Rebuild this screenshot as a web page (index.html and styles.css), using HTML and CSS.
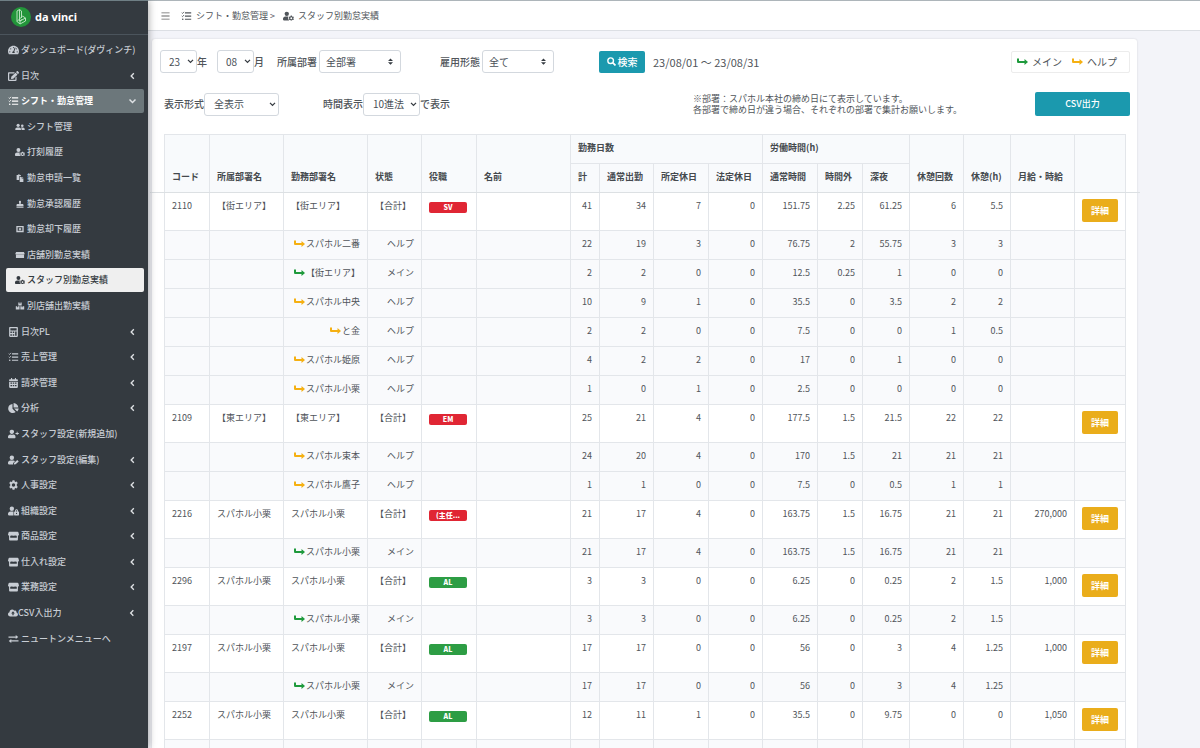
FILE: index.html
```html
<!DOCTYPE html>
<html lang="ja">
<head>
    <meta charset="UTF-8">
    <meta name="viewport" content="width=device-width, initial-scale=1.0">
    <title>スタッフ別勤怠実績 | da vinci</title>
    <link rel="stylesheet" href="styles.css">
</head>
<body>
    <svg class="sprite" aria-hidden="true">
        <symbol id="dashboard" viewBox="0 0 576 512"><path d="M288 32C128.94 32 0 160.94 0 320c0 52.8 14.25 102.26 39.06 144.8 5.61 9.62 16.3 15.2 27.44 15.2h443c11.14 0 21.83-5.58 27.44-15.2C561.75 422.26 576 372.8 576 320c0-159.06-128.94-288-288-288zm0 64c14.71 0 26.58 10.13 30.32 23.65-1.11 2.26-2.64 4.23-3.45 6.67l-9.22 27.67c-5.13 3.49-10.97 6.01-17.64 6.01-17.67 0-32-14.33-32-32S270.33 96 288 96zM96 384c-17.67 0-32-14.33-32-32s14.33-32 32-32 32 14.33 32 32-14.33 32-32 32zm48-160c-17.67 0-32-14.33-32-32s14.33-32 32-32 32 14.33 32 32-14.33 32-32 32zm246.77-72.41l-61.33 184C343.13 347.33 352 364.54 352 384c0 11.72-3.38 22.55-8.88 32H232.88c-5.5-9.45-8.88-20.28-8.88-32 0-33.94 26.5-61.43 59.9-63.59l61.34-184.01c4.17-12.56 17.73-19.45 30.36-15.17 12.57 4.19 19.35 17.79 15.17 30.36zm14.66 57.2l15.52-46.55c3.47-1.29 7.13-2.23 11.05-2.23 17.67 0 32 14.33 32 32s-14.33 32-32 32c-11.38-.01-20.89-6.28-26.57-15.22zM480 384c-17.67 0-32-14.33-32-32s14.33-32 32-32 32 14.33 32 32-14.33 32-32 32z"/></symbol>
        <symbol id="edit" viewBox="0 0 576 512"><path d="M402.6 83.2l90.2 90.2c3.8 3.8 3.8 10 0 13.8L274.4 405.6l-92.8 10.3c-12.4 1.4-22.9-9.1-21.5-21.5l10.3-92.8L388.8 83.2c3.8-3.8 10-3.8 13.8 0zm162-22.9l-48.8-48.8c-15.2-15.2-39.9-15.2-55.2 0l-35.4 35.4c-3.8 3.8-3.8 10 0 13.8l90.2 90.2c3.8 3.8 10 3.8 13.8 0l35.4-35.4c15.2-15.3 15.2-40 0-55.2zM384 346.2V448H64V128h229.8c3.2 0 6.2-1.3 8.5-3.5l40-40c7.6-7.6 2.2-20.5-8.5-20.5H48C21.5 64 0 85.5 0 112v352c0 26.5 21.5 48 48 48h352c26.5 0 48-21.5 48-48V306.2c0-10.7-12.9-16-20.5-8.5l-40 40c-2.2 2.3-3.5 5.3-3.5 8.5z"/></symbol>
        <symbol id="tasks" viewBox="0 0 512 512"><path d="M176 64h320v60H176zM176 228h320v60H176zM176 392h320v60H176z"/><path d="M12 88l40 38 74-82M12 252l40 38 74-82" fill="none" stroke="currentColor" stroke-width="44"/><circle cx="64" cy="420" r="42"/></symbol>
        <symbol id="users" viewBox="0 0 640 512"><circle cx="200" cy="150" r="100"/><path d="M20 450v-50c0-70 50-120 110-120h140c60 0 110 50 110 120v50z"/><circle cx="465" cy="170" r="82"/><path d="M420 450v-50c0-48-18-84-44-112 14-6 28-8 44-8h90c60 0 110 50 110 120v50z"/></symbol>
        <symbol id="user" viewBox="0 0 448 512"><path d="M224 256c70.7 0 128-57.3 128-128S294.7 0 224 0 96 57.3 96 128s57.3 128 128 128zm89.600 32h-16.700c-22.200 10.200-46.900 16-72.900 16s-50.600-5.800-72.900-16h-16.700C60.200 288 0 348.200 0 422.400V464c0 26.500 21.500 48 48 48h352c26.500 0 48-21.500 48-48v-41.600c0-74.200-60.200-134.400-134.400-134.400z"/></symbol>
        <symbol id="user-cog" viewBox="0 0 640 512"><circle cx="220" cy="128" r="126"/><path d="M310 288c-10 25-14 50-14 80 0 55 24 105 62 144H48c-26 0-48-22-48-48v-42c0-74 60-134 134-134z"/><path fill-rule="evenodd" d="M450 232h64l10 42 36 20 42-12 32 54-32 31v40l32 31-32 54-42-12-36 20-10 12h-64l-10-12-36-20-42 12-32-54 32-31v-40l-32-31 32-54 42 12 36-20zM482 330a56 56 0 1 0 0 112a56 56 0 1 0 0-112z"/></symbol>
        <symbol id="user-plus" viewBox="0 0 640 512"><use href="#user" width="448" height="512"/><path d="M508 130h48v70h72v50h-72v70h-48v-70h-72v-50h72z"/></symbol>
        <symbol id="user-edit" viewBox="0 0 640 512"><circle cx="224" cy="128" r="128"/><path d="M134 288h180c38 0 70 16 94 40L300 436l-10 76H48c-26 0-48-22-48-48v-42c0-74 60-134 134-134z"/><path d="M540 256l84 84-180 164-104 8 10-86z"/></symbol>
        <symbol id="user-lock" viewBox="0 0 640 512"><circle cx="224" cy="128" r="128"/><path d="M134 288h180l6 6v218H48c-26 0-48-22-48-48v-42c0-74 60-134 134-134z"/><path fill-rule="evenodd" d="M384 288h24v-44c0-50 40-90 88-90s88 40 88 90v44h24c18 0 32 14 32 32v160c0 18-14 32-32 32H384c-18 0-32-14-32-32V320c0-18 14-32 32-32zm76 0h72v-44c0-20-16-38-36-38s-36 18-36 38zM496 362a36 36 0 1 0 0 72a36 36 0 1 0 0-72z"/></symbol>
        <symbol id="paste" viewBox="0 0 512 512"><path d="M40 60h90l30-40h50l30 40h70v90H200v240H40z"/><path d="M236 190h130v100h106v220H236zM396 190l76 72h-76z"/></symbol>
        <symbol id="stamp" viewBox="0 0 512 512"><path d="M32 430h448v64H32zM190 110c0-90 132-90 132 0 0 60-32 90-20 150h110c40 0 68 30 68 68v66H32v-66c0-38 28-68 68-68h110c12-60-20-90-20-150z"/></symbol>
        <symbol id="reject" viewBox="0 0 512 512"><path fill-rule="evenodd" d="M20 60h472v400H20zM106 146v228h300V146zM206 174l50 50 50-50 36 36-50 50 50 50-36 36-50-50-50 50-36-36 50-50-50-50z"/></symbol>
        <symbol id="shop" viewBox="0 0 640 512"><path d="M70 60h500l60 140H10zM60 220h520v230H60z"/></symbol>
        <symbol id="store" viewBox="0 0 616 512"><path fill-rule="evenodd" d="M80 16h456c24 0 38 12 44 30l32 110c12 50-20 84-56 88v210c0 28-20 50-48 50H108c-28 0-48-22-48-50V244c-36-4-68-38-56-88L36 46c6-18 20-30 44-30zM124 244v116h368V244c-38 10-66-4-92-26-54 40-130 40-184 0-26 22-54 36-92 26z"/></symbol>
        <symbol id="boxes" viewBox="0 0 576 512"><path d="M180 30h80v74h56V30h80v190H180zM20 270h90v70h50v-70h100v210H20zM310 270h90v70h50v-70h106v210H310z"/></symbol>
        <symbol id="calculator" viewBox="0 0 448 512"><path fill-rule="evenodd" d="M48 0h352c26 0 48 22 48 48v416c0 26-22 48-48 48H48c-26 0-48-22-48-48V48C0 22 22 0 48 0zM64 64v112h320V64zM64 232v76h76v-76zM186 232v76h76v-76zM308 232v212h76V232zM64 368v76h76v-76zM186 368v76h76v-76z"/></symbol>
        <symbol id="calendar" viewBox="0 0 448 512"><path fill-rule="evenodd" d="M96 0h56v64h144V0h56v64h48c26 0 48 22 48 48v352c0 26-22 48-48 48H48c-26 0-48-22-48-48V112c0-26 22-48 48-48h48zM0 152v34h448v-34zM70 230v70h76v-70zM186 230v70h76v-70zM302 230v70h76v-70zM70 358v70h76v-70zM186 358v70h76v-70zM302 358v70h76v-70z"/></symbol>
        <symbol id="pie" viewBox="0 0 544 512"><path d="M220 48v244l164 164c-40 36-92 56-144 56C108 512 0 404 0 276 0 152 96 54 220 48z"/><path d="M276 0c136 8 236 108 244 236H276zM300 284h240c-6 60-34 110-76 150z"/></symbol>
        <symbol id="cog" viewBox="0 0 512 512"><path fill-rule="evenodd" d="M206 12h100l12 62 46 26 60-20 50 86-48 42v96l48 42-50 86-60-20-46 26-12 62H206l-12-62-46-26-60 20-50-86 48-42v-96l-48-42 50-86 60 20 46-26zM256 168a88 88 0 1 0 0 176a88 88 0 1 0 0-176z"/></symbol>
        <symbol id="cloud" viewBox="0 0 640 512"><path fill-rule="evenodd" d="M538 227c4-12 6-23 6-35 0-72-82-118-144-80C324-14 96 22 96 208 40 224 0 278 0 336c0 80 64 144 144 144h368c140 0 182-198 26-253zM320 150l120 130h-80v112h-80V280h-80z"/></symbol>
        <symbol id="exchange" viewBox="0 0 512 512"><path d="M0 128h370V56l130 102-130 102v-72H0zM512 324H142v-72L12 354l130 102v-72h370z"/></symbol>
        <symbol id="bars" viewBox="0 0 448 512"><path d="M16 76h416v42H16zM16 236h416v42H16zM16 396h416v42H16z"/></symbol>
        <symbol id="left" viewBox="0 0 8 12"><path d="M6 2L2 6l4 4" fill="none" stroke="currentColor" stroke-width="2"/></symbol>
        <symbol id="down" viewBox="0 0 12 8"><path d="M2 2l4 4 4-4" fill="none" stroke="currentColor" stroke-width="2"/></symbol>
        <symbol id="search" viewBox="0 0 16 16"><path d="M10.500 10.500L15 15" stroke="currentColor" stroke-width="3"/><circle cx="6.500" cy="6.500" r="5" fill="none" stroke="currentColor" stroke-width="2.500"/></symbol>
        <symbol id="arrow" viewBox="0 0 22 14"><path d="M0 1h4v5h11V2l7 6-7 6v-4H3c-2 0-3-1-3-3z"/></symbol>
    </svg>

    <aside class="sidebar">
        <a class="brand" href="#">
            <svg class="logo" viewBox="0 0 40 40"><circle cx="20" cy="20" r="20" fill="#23953a"/><path d="M12 29V8l5-3v19l-5 5M17 5l4 3v14M12 29l6 5 11-6v-6l-6-4-6 6v4l5-3M18 34v-6l11-6" fill="none" stroke="#b7e3bd" stroke-width="2"/></svg>
            da vinci
        </a>
        <nav class="menu">
            <a href="#"><svg><use href="#dashboard"/></svg>ダッシュボード(ダヴィンチ)</a>
            <a href="#"><svg><use href="#edit"/></svg>日次<svg class="chevron"><use href="#left"/></svg></a>
            <a class="open" href="#"><svg><use href="#tasks"/></svg>シフト・勤怠管理<svg class="chevron"><use href="#down"/></svg></a>
            <a class="sub" href="#"><svg><use href="#users"/></svg>シフト管理</a>
            <a class="sub" href="#"><svg><use href="#user-cog"/></svg>打刻履歴</a>
            <a class="sub" href="#"><svg><use href="#paste"/></svg>勤怠申請一覧</a>
            <a class="sub" href="#"><svg><use href="#stamp"/></svg>勤怠承認履歴</a>
            <a class="sub" href="#"><svg><use href="#reject"/></svg>勤怠却下履歴</a>
            <a class="sub" href="#"><svg><use href="#shop"/></svg>店舗別勤怠実績</a>
            <a class="sub current" href="#"><svg><use href="#user-cog"/></svg>スタッフ別勤怠実績</a>
            <a class="sub" href="#"><svg><use href="#boxes"/></svg>別店舗出勤実績</a>
            <a href="#"><svg><use href="#calculator"/></svg>日次PL<svg class="chevron"><use href="#left"/></svg></a>
            <a href="#"><svg><use href="#tasks"/></svg>売上管理<svg class="chevron"><use href="#left"/></svg></a>
            <a href="#"><svg><use href="#calendar"/></svg>請求管理<svg class="chevron"><use href="#left"/></svg></a>
            <a href="#"><svg><use href="#pie"/></svg>分析<svg class="chevron"><use href="#left"/></svg></a>
            <a href="#"><svg><use href="#user-plus"/></svg>スタッフ設定(新規追加)</a>
            <a href="#"><svg><use href="#user-edit"/></svg>スタッフ設定(編集)<svg class="chevron"><use href="#left"/></svg></a>
            <a href="#"><svg><use href="#cog"/></svg>人事設定<svg class="chevron"><use href="#left"/></svg></a>
            <a href="#"><svg><use href="#user-lock"/></svg>組織設定<svg class="chevron"><use href="#left"/></svg></a>
            <a href="#"><svg><use href="#store"/></svg>商品設定<svg class="chevron"><use href="#left"/></svg></a>
            <a href="#"><svg><use href="#store"/></svg>仕入れ設定<svg class="chevron"><use href="#left"/></svg></a>
            <a href="#"><svg><use href="#store"/></svg>業務設定<svg class="chevron"><use href="#left"/></svg></a>
            <a class="narrow" href="#"><svg><use href="#cloud"/></svg>CSV入出力<svg class="chevron"><use href="#left"/></svg></a>
            <a href="#"><svg><use href="#exchange"/></svg>ニュートンメニューへ</a>
        </nav>
    </aside>

    <div class="page">
        <header class="topbar">
            <button class="toggle" type="button" aria-label="メニュー"><svg><use href="#bars"/></svg></button>
            <a href="#"><svg><use href="#tasks"/></svg>シフト・勤怠管理 &gt;</a>
            <a href="#"><svg><use href="#user-cog"/></svg>スタッフ別勤怠実績</a>
        </header>

        <main class="card">
            <form class="filters">
                <div class="field year"><select id="year"><option>23</option></select><label for="year">年</label></div>
                <div class="field month"><select id="month"><option>08</option></select><label for="month">月</label></div>
                <div class="field dept"><label for="dept">所属部署</label><select class="updown" id="dept"><option>全部署</option></select></div>
                <div class="field employ"><label for="employ">雇用形態</label><select class="updown" id="employ"><option>全て</option></select></div>
                <button class="btn search" type="button"><svg><use href="#search"/></svg>検索</button>
                <span class="range">23/08/01 ～ 23/08/31</span>
                <div class="legend">
                    <span><svg class="arrow main"><use href="#arrow"/></svg>メイン</span>
                    <span><svg class="arrow help"><use href="#arrow"/></svg>ヘルプ</span>
                </div>
            </form>
            <form class="filters second">
                <div class="field format"><label for="format">表示形式</label><select id="format"><option>全表示</option></select></div>
                <div class="field time"><label for="time">時間表示</label><select id="time"><option>10進法</option></select><span>で表示</span></div>
                <p class="note">※部署：スパホル本社の締め日にて表示しています。<br>各部署で締め日が違う場合、それぞれの部署で集計お願いします。</p>
                <button class="btn csv" type="button">CSV出力</button>
            </form>

            <div class="table-area">
                <table>
                    <colgroup>
                        <col class="w45"><col class="w74"><col class="w84"><col class="w54"><col class="w55"><col class="w94">
                        <col class="w29"><col class="w54"><col class="w55"><col class="w54"><col class="w55"><col class="w45"><col class="w47">
                        <col class="w54"><col class="w47"><col class="w64"><col class="w51">
                    </colgroup>
                    <thead>
                        <tr>
                            <th rowspan="2">コード</th><th rowspan="2">所属部署名</th><th rowspan="2">勤務部署名</th><th rowspan="2">状態</th><th rowspan="2">役職</th><th rowspan="2">名前</th>
                            <th colspan="4">勤務日数</th><th colspan="3">労働時間(h)</th>
                            <th rowspan="2">休憩回数</th><th rowspan="2">休憩(h)</th><th rowspan="2">月給・時給</th><th rowspan="2"></th>
                        </tr>
                        <tr>
                            <th>計</th><th>通常出勤</th><th>所定休日</th><th>法定休日</th><th>通常時間</th><th>時間外</th><th>深夜</th>
                        </tr>
                    </thead>
                    <tbody>
                        <tr class="total"><td>2110</td><td>【街エリア】</td><td>【街エリア】</td><td>【合計】</td><td><span class="badge red">SV</span></td><td></td><td>41</td><td>34</td><td>7</td><td>0</td><td>151.75</td><td>2.25</td><td>61.25</td><td>6</td><td>5.5</td><td></td><td><button class="detail" type="button">詳細</button></td></tr>
                        <tr><td></td><td></td><td><svg class="arrow help"><use href="#arrow"/></svg>スパホル二番</td><td>ヘルプ</td><td></td><td></td><td>22</td><td>19</td><td>3</td><td>0</td><td>76.75</td><td>2</td><td>55.75</td><td>3</td><td>3</td><td></td><td></td></tr>
                        <tr><td></td><td></td><td><svg class="arrow main"><use href="#arrow"/></svg>【街エリア】</td><td>メイン</td><td></td><td></td><td>2</td><td>2</td><td>0</td><td>0</td><td>12.5</td><td>0.25</td><td>1</td><td>0</td><td>0</td><td></td><td></td></tr>
                        <tr><td></td><td></td><td><svg class="arrow help"><use href="#arrow"/></svg>スパホル中央</td><td>ヘルプ</td><td></td><td></td><td>10</td><td>9</td><td>1</td><td>0</td><td>35.5</td><td>0</td><td>3.5</td><td>2</td><td>2</td><td></td><td></td></tr>
                        <tr><td></td><td></td><td><svg class="arrow help"><use href="#arrow"/></svg>と金</td><td>ヘルプ</td><td></td><td></td><td>2</td><td>2</td><td>0</td><td>0</td><td>7.5</td><td>0</td><td>0</td><td>1</td><td>0.5</td><td></td><td></td></tr>
                        <tr><td></td><td></td><td><svg class="arrow help"><use href="#arrow"/></svg>スパホル姫原</td><td>ヘルプ</td><td></td><td></td><td>4</td><td>2</td><td>2</td><td>0</td><td>17</td><td>0</td><td>1</td><td>0</td><td>0</td><td></td><td></td></tr>
                        <tr><td></td><td></td><td><svg class="arrow help"><use href="#arrow"/></svg>スパホル小栗</td><td>ヘルプ</td><td></td><td></td><td>1</td><td>0</td><td>1</td><td>0</td><td>2.5</td><td>0</td><td>0</td><td>0</td><td>0</td><td></td><td></td></tr>
                        <tr class="total"><td>2109</td><td>【東エリア】</td><td>【東エリア】</td><td>【合計】</td><td><span class="badge red">EM</span></td><td></td><td>25</td><td>21</td><td>4</td><td>0</td><td>177.5</td><td>1.5</td><td>21.5</td><td>22</td><td>22</td><td></td><td><button class="detail" type="button">詳細</button></td></tr>
                        <tr><td></td><td></td><td><svg class="arrow help"><use href="#arrow"/></svg>スパホル束本</td><td>ヘルプ</td><td></td><td></td><td>24</td><td>20</td><td>4</td><td>0</td><td>170</td><td>1.5</td><td>21</td><td>21</td><td>21</td><td></td><td></td></tr>
                        <tr><td></td><td></td><td><svg class="arrow help"><use href="#arrow"/></svg>スパホル鷹子</td><td>ヘルプ</td><td></td><td></td><td>1</td><td>1</td><td>0</td><td>0</td><td>7.5</td><td>0</td><td>0.5</td><td>1</td><td>1</td><td></td><td></td></tr>
                        <tr class="total"><td>2216</td><td>スパホル小栗</td><td>スパホル小栗</td><td>【合計】</td><td><span class="badge red">(主任...</span></td><td></td><td>21</td><td>17</td><td>4</td><td>0</td><td>163.75</td><td>1.5</td><td>16.75</td><td>21</td><td>21</td><td>270,000</td><td><button class="detail" type="button">詳細</button></td></tr>
                        <tr><td></td><td></td><td><svg class="arrow main"><use href="#arrow"/></svg>スパホル小栗</td><td>メイン</td><td></td><td></td><td>21</td><td>17</td><td>4</td><td>0</td><td>163.75</td><td>1.5</td><td>16.75</td><td>21</td><td>21</td><td></td><td></td></tr>
                        <tr class="total"><td>2296</td><td>スパホル小栗</td><td>スパホル小栗</td><td>【合計】</td><td><span class="badge green">AL</span></td><td></td><td>3</td><td>3</td><td>0</td><td>0</td><td>6.25</td><td>0</td><td>0.25</td><td>2</td><td>1.5</td><td>1,000</td><td><button class="detail" type="button">詳細</button></td></tr>
                        <tr><td></td><td></td><td><svg class="arrow main"><use href="#arrow"/></svg>スパホル小栗</td><td>メイン</td><td></td><td></td><td>3</td><td>3</td><td>0</td><td>0</td><td>6.25</td><td>0</td><td>0.25</td><td>2</td><td>1.5</td><td></td><td></td></tr>
                        <tr class="total"><td>2197</td><td>スパホル小栗</td><td>スパホル小栗</td><td>【合計】</td><td><span class="badge green">AL</span></td><td></td><td>17</td><td>17</td><td>0</td><td>0</td><td>56</td><td>0</td><td>3</td><td>4</td><td>1.25</td><td>1,000</td><td><button class="detail" type="button">詳細</button></td></tr>
                        <tr><td></td><td></td><td><svg class="arrow main"><use href="#arrow"/></svg>スパホル小栗</td><td>メイン</td><td></td><td></td><td>17</td><td>17</td><td>0</td><td>0</td><td>56</td><td>0</td><td>3</td><td>4</td><td>1.25</td><td></td><td></td></tr>
                        <tr class="total"><td>2252</td><td>スパホル小栗</td><td>スパホル小栗</td><td>【合計】</td><td><span class="badge green">AL</span></td><td></td><td>12</td><td>11</td><td>1</td><td>0</td><td>35.5</td><td>0</td><td>9.75</td><td>0</td><td>0</td><td>1,050</td><td><button class="detail" type="button">詳細</button></td></tr>
                        <tr><td></td><td></td><td><svg class="arrow main"><use href="#arrow"/></svg>スパホル小栗</td><td>メイン</td><td></td><td></td><td>12</td><td>11</td><td>1</td><td>0</td><td>35.5</td><td>0</td><td>9.75</td><td>0</td><td>0</td><td></td><td></td></tr>
                    </tbody>
                </table>
            </div>
        </main>
    </div>
</body>
</html>
```
FILE: styles.css
```css
* { box-sizing: border-box; margin: 0; padding: 0; }
body {
    display: flex;
    height: 100vh;
    overflow: hidden;
    background: #f3f4f9;
    color: #50555a;
    font-family: "Noto Sans CJK JP", "Noto Sans", sans-serif;
    font-size: 9px;
    line-height: 12px;
}
a { color: inherit; text-decoration: none; }
svg { fill: currentColor; flex: none; }
button, select { font: inherit; }
.sprite { position: absolute; width: 0; height: 0; }

/* sidebar */
.sidebar {
    display: flex;
    flex-direction: column;
    flex: 0 0 148px;
    background: #343a40;
    color: #c8cdd4;
    border-top: 1px solid #6f7f85;
    box-shadow: 0 0 8px rgba(0, 0, 0, 0.4);
    z-index: 1;
}
.brand {
    display: flex;
    align-items: center;
    gap: 4px;
    height: 34px;
    padding: 0 0 2px 11px;
    border-bottom: 1px solid #4b545c;
    color: #fff;
    font-family: "Noto Sans", sans-serif;
    font-size: 11px;
    font-weight: 700;
}
.logo { width: 20px; height: 20px; }
.menu {
    display: flex;
    flex: 1;
    flex-direction: column;
    justify-content: space-between;
    margin: 3px 0 97px;
}
.menu a {
    display: flex;
    align-items: center;
    gap: 2px;
    height: 24px;
    margin-right: 4px;
    padding: 0 7px 0 8px;
    border-radius: 0 2px 2px 0;
    font-weight: 500;
    white-space: nowrap;
}
.menu svg { width: 11px; height: 10px; }
.menu .sub { margin-left: 6px; padding-left: 9px; border-radius: 2px; }
.menu .sub svg { width: 10px; height: 8px; }
.menu .narrow { gap: 0; }
.menu .narrow svg { width: 10px; height: 8px; }
.menu .open { background: #6c777b; color: #fff; font-weight: 700; }
.menu .current { background: #efefef; color: #343a40; }
.menu .chevron { width: 9px; height: 8px; margin-left: auto; color: #dfe2e5; }

/* top bar */
.page { flex: 1; min-width: 0; }
.topbar {
    display: flex;
    align-items: center;
    gap: 8px;
    height: 31px;
    padding-left: 12px;
    background: #fff;
    border-top: 1px solid #adb5ba;
    border-bottom: 1px solid #dcdfe4;
}
.topbar a { display: flex; align-items: center; gap: 4px; }
.topbar svg { width: 11px; height: 10px; }
.toggle {
    display: flex;
    margin-right: 2px;
    background: none;
    border: 0;
    color: #666;
}

/* filters */
.card {
    margin: 8px 63px 0 4px;
    padding: 11px 7px;
    background: #fff;
    border-radius: 3px;
    box-shadow: 0 0 2px rgba(0, 0, 0, 0.15);
}
.filters {
    display: flex;
    align-items: center;
    font-size: 10px;
    white-space: nowrap;
}
.second { margin: 19px 0 18px; padding-left: 5px; }
.field { display: flex; align-items: center; font-weight: 500; }
select {
    height: 23px;
    padding: 0 7px;
    appearance: none;
    border: 1px solid #d3d8de;
    border-radius: 3px;
    background: #fff url("data:image/svg+xml,%3Csvg xmlns='http://www.w3.org/2000/svg' viewBox='0 0 8 6'%3E%3Cpath d='M1 1l3 3 3-3' fill='none' stroke='%23343a40' stroke-width='1.500'/%3E%3C/svg%3E") no-repeat right 2px center / 7px 5px;
    color: #495057;
    font-weight: 400;
}
.updown {
    padding: 0 6px;
    background-image: url("data:image/svg+xml,%3Csvg xmlns='http://www.w3.org/2000/svg' viewBox='0 0 4 5'%3E%3Cpath fill='%23343a40' d='M2 0L0 2h4zm0 5L0 3h4z'/%3E%3C/svg%3E");
    background-position: right 7px center;
    background-size: 5px 7px;
}
.year { margin-left: 1px; }
.year select, .month select { width: 37px; padding-left: 8px; }
.month { margin-left: 10px; }
.dept, .employ { gap: 2px; }
.dept { margin-left: 13px; }
.dept select { width: 82px; }
.employ { margin-left: 39px; }
.employ select { width: 72px; }
.format select { width: 75px; padding-left: 9px; }
.time { margin-left: 44px; }
.time select { width: 57px; padding-left: 9px; }
.btn {
    display: flex;
    align-items: center;
    justify-content: center;
    gap: 2px;
    background: #1b99ae;
    border: 0;
    border-radius: 2px;
    color: #fff;
    font-weight: 500;
}
.search { width: 46px; height: 22px; margin-left: 45px; }
.search svg { width: 9px; height: 9px; }
.range { margin-left: 8px; font-size: 11px; }
.legend {
    display: flex;
    gap: 10px;
    width: 119px;
    height: 22px;
    margin-left: auto;
    padding-left: 5px;
    border: 1px solid #ececec;
    border-radius: 2px;
}
.legend span { display: flex; align-items: center; gap: 4px; }
.note { margin-left: 243px; font-size: 9px; line-height: 11px; }
.csv { width: 95px; height: 24px; margin-left: auto; font-size: 9px; }
.arrow { width: 11px; height: 7px; }
.main { color: #1f9a3c; }
.help { color: #f5b012; }

/* table */
.table-area { position: relative; margin: 0 6px 0 5px; }
.table-area::after {
    content: "";
    position: absolute;
    top: 58px;
    left: -14px;
    right: -16px;
    border-top: 1px solid #dce0e3;
}
table { width: 100%; table-layout: fixed; border-collapse: collapse; }
th, td {
    padding: 7px 7px 9px;
    border: 1px solid #e3e6ea;
    white-space: nowrap;
    vertical-align: top;
}
th {
    background: #f8fafc;
    color: #44494d;
    font-weight: 700;
    text-align: left;
    vertical-align: bottom;
}
tbody tr { height: 29px; background: #f9fafc; text-align: right; }
tbody .total { height: 38px; background: #fff; }
.total td:nth-child(-n+5) { text-align: left; }
td:last-child { padding: 6px 7px 8px; }
td .arrow { margin-right: 1px; }
.badge {
    display: block;
    width: 38px;
    height: 11px;
    margin-top: 2px;
    border-radius: 2px;
    color: #fff;
    font-size: 7px;
    font-weight: 900;
    line-height: 11px;
    text-align: center;
}
.red { background: #e02634; }
.green { background: #2d9d44; }
.detail {
    display: block;
    width: 36px;
    height: 23px;
    background: #eaad1b;
    border: 0;
    border-radius: 2px;
    color: #fff;
    font-weight: 700;
}
.w29 { width: 29px; }
.w45 { width: 45px; }
.w47 { width: 47px; }
.w51 { width: 51px; }
.w54 { width: 54px; }
.w55 { width: 55px; }
.w64 { width: 64px; }
.w74 { width: 74px; }
.w84 { width: 84px; }
.w94 { width: 94px; }
```
